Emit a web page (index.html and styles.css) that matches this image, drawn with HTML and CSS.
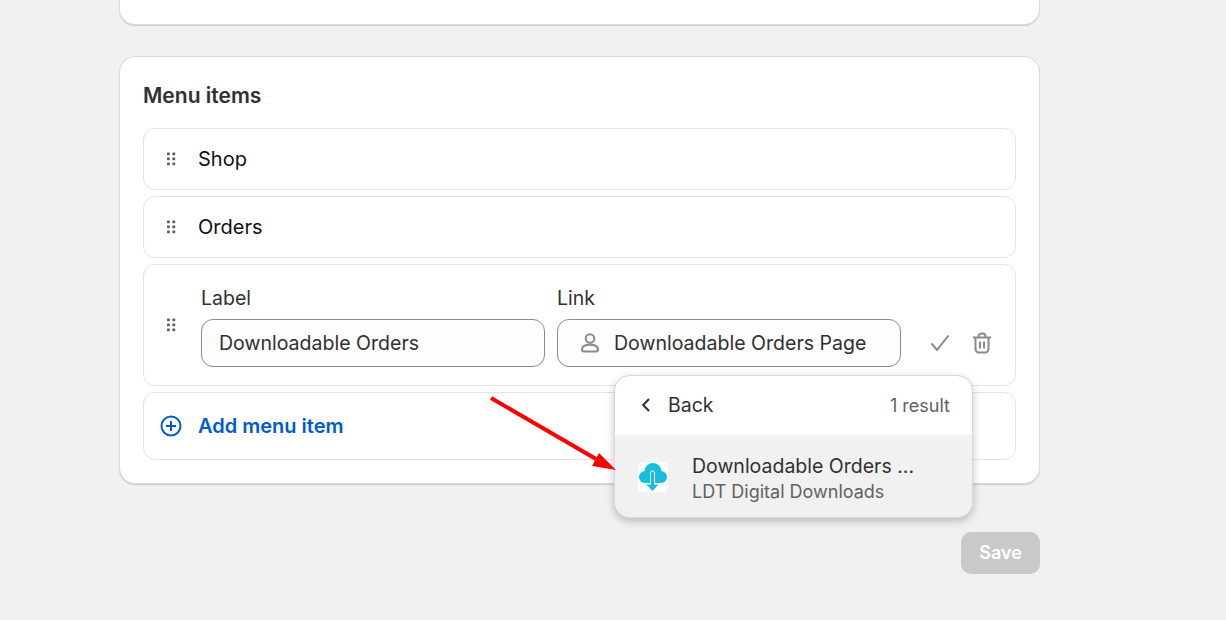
FILE: index.html
```html
<!DOCTYPE html>
<html lang="en">
<head>
<meta charset="utf-8">
<title>Menu items</title>
<link rel="stylesheet" href="styles.css">
</head>
<body>
<main class="page">
  <div class="card card-top"></div>
  <section class="card card-menu">
    <h2 class="title">Menu items</h2>
    <div class="rows">
      <div class="row row-simple">
        <svg class="drag" viewBox="-1 -.5 10 14" width="10" height="14"><g fill="#5c5c5c"><rect x="0" y="0" width="2.800" height="2.800" rx=".7"/><rect x="5.400" y="0" width="2.800" height="2.800" rx=".7"/><rect x="0" y="5" width="2.800" height="2.800" rx=".7"/><rect x="5.400" y="5" width="2.800" height="2.800" rx=".7"/><rect x="0" y="10" width="2.800" height="2.800" rx=".7"/><rect x="5.400" y="10" width="2.800" height="2.800" rx=".7"/></g></svg>
        <span class="row-text">Shop</span>
      </div>
      <div class="row row-simple">
        <svg class="drag" viewBox="-1 -.5 10 14" width="10" height="14"><g fill="#5c5c5c"><rect x="0" y="0" width="2.800" height="2.800" rx=".7"/><rect x="5.400" y="0" width="2.800" height="2.800" rx=".7"/><rect x="0" y="5" width="2.800" height="2.800" rx=".7"/><rect x="5.400" y="5" width="2.800" height="2.800" rx=".7"/><rect x="0" y="10" width="2.800" height="2.800" rx=".7"/><rect x="5.400" y="10" width="2.800" height="2.800" rx=".7"/></g></svg>
        <span class="row-text">Orders</span>
      </div>
      <div class="row row-edit">
        <svg class="drag drag-edit" viewBox="-1 -.5 10 14" width="10" height="14"><g fill="#5c5c5c"><rect x="0" y="0" width="2.800" height="2.800" rx=".7"/><rect x="5.400" y="0" width="2.800" height="2.800" rx=".7"/><rect x="0" y="5" width="2.800" height="2.800" rx=".7"/><rect x="5.400" y="5" width="2.800" height="2.800" rx=".7"/><rect x="0" y="10" width="2.800" height="2.800" rx=".7"/><rect x="5.400" y="10" width="2.800" height="2.800" rx=".7"/></g></svg>
        <div class="field">
          <label class="field-label">Label</label>
          <div class="input"><span>Downloadable Orders</span></div>
        </div>
        <div class="field">
          <label class="field-label">Link</label>
          <div class="input input-icon">
            <svg viewBox="0 0 20 22" width="20" height="22" fill="none" stroke="#8a8a8a" stroke-width="2"><circle cx="10" cy="6.500" r="4.300"/><path d="M2 17.500c0-3.200 3-4.700 8-4.700s8 1.500 8 4.700c0 1.300-.8 2-2 2H4c-1.200 0-2-.7-2-2z"/></svg>
            <span>Downloadable Orders Page</span>
          </div>
        </div>
        <div class="actions">
          <svg viewBox="0 0 20 20" width="20" height="20" fill="none" stroke="#8a8a8a" stroke-width="2"><path d="M1.500 10.500l5.500 6.500L18.500 2.500"/></svg>
          <svg viewBox="0 0 20 22" width="20" height="22" fill="none" stroke="#8a8a8a" stroke-width="2"><path d="M1 5.500h18M6.500 5V4.500a3 3 0 0 1 3-3h1a3 3 0 0 1 3 3V5M3.500 5.500v11.500a3.500 3.500 0 0 0 3.500 3.500h6a3.500 3.500 0 0 0 3.500-3.500V5.500M8 9.500v7M12 9.500v7"/></svg>
        </div>
      </div>
      <div class="row row-add">
        <svg viewBox="0 0 22 22" width="22" height="22" fill="none" stroke="#005bd3" stroke-width="2"><circle cx="11" cy="11" r="9.500"/><path d="M11 6v10M6 11h10"/></svg>
        <span class="add-text">Add menu item</span>
      </div>
    </div>
  </section>
  <div class="footer"><button class="save">Save</button></div>

  <div class="popover">
    <div class="pop-head">
      <svg viewBox="0 0 12 16" width="12" height="16" fill="none" stroke="#303030" stroke-width="2"><path d="M9 2L3.200 8 9 14"/></svg>
      <span class="back">Back</span>
      <span class="count">1 result</span>
    </div>
    <div class="pop-item">
      <div class="app-icon">
        <svg viewBox="0 0 30 30" width="30" height="30"><g fill="#17bde0"><circle cx="15" cy="9.500" r="8.500"/><circle cx="7" cy="15" r="6"/><circle cx="23" cy="15" r="6"/><rect x="7" y="12" width="16" height="9"/></g><path fill="none" stroke="#fff" stroke-width="1" d="M12.500 23V11a2 2 0 0 1 4 0V23"/><path fill="#17bde0" d="M13 11h3v13h-3z"/><path fill="#17bde0" d="M8.500 22.500h12l-6 6.500z"/></svg>
      </div>
      <div class="item-text">
        <div class="item-title">Downloadable Orders ...</div>
        <div class="item-sub">LDT Digital Downloads</div>
      </div>
    </div>
  </div>

  <svg class="arrow" viewBox="0 0 130 80" width="130" height="80"><path d="M1 2L106 63" stroke="#f00" stroke-width="4" fill="none"/><path d="M126 74L102 70 109 57z" fill="#f00"/></svg>
</main>
</body>
</html>
```
FILE: styles.css
```css
* { box-sizing: border-box; }
html, body { margin: 0; height: 620px; overflow: hidden; }
body {
  background: #f1f1f1;
  font-family: Inter, "Liberation Sans", sans-serif;
  color: #303030;
}
.page { position: relative; width: 921px; margin-left: 119px; height: 620px; }
.card {
  background: #fff;
  border: 1px solid #dcdcdc;
  box-shadow: 0 1px 1px rgba(0,0,0,.16);
  border-radius: 16px;
}
.card-top { height: 25px; border-top: 0; border-radius: 0 0 16px 16px; }
.card-menu { margin-top: 31px; height: 428px; padding: 24px 23px 23px 23px; }
.title { margin: 0 0 19px; font-size: 21px; line-height: 30px; font-weight: 600; height: 28px; }
.rows { display: flex; flex-direction: column; gap: 6px; }
.row {
  border: 1px solid #e3e3e3;
  border-radius: 12px;
  background: #fff;
  display: flex;
  align-items: center;
}
.row-simple { height: 62px; padding-left: 22px; }
.drag { flex: none; }
.row-text { margin-left: 22px; font-size: 20px; color: #111; }
.row-edit { height: 122px; padding-left: 22px; position: relative; }
.drag-edit { margin-right: 25px; }
.field { width: 344px; margin-right: 12px; align-self: flex-start; margin-top: 21px; }
.field-label { display: block; font-size: 19.500px; line-height: 24px; margin-bottom: 9px; }
.input {
  height: 48px;
  border: 1px solid #8a8a8a;
  border-radius: 12px;
  background: #fdfdfd;
  display: flex;
  align-items: center;
  padding-left: 17px;
  font-size: 19.550px;
}
.input-icon { padding-left: 22px; gap: 14px; }
.actions { display: flex; align-items: center; gap: 22px; margin: 36px 0 0 17px; }
.row-add { height: 68px; padding-left: 16px; gap: 16px; }
.add-text { color: #005bd3; font-size: 20px; font-weight: 600; }
.footer { display: flex; justify-content: flex-end; margin-top: 48px; }
.save {
  width: 79px; height: 42px; border: 0; border-radius: 10px; padding: 0 0 2px;
  background: #c9c9c9; color: #fff; font: 600 18px Inter, sans-serif;
}
.popover {
  position: absolute; left: 495px; top: 375px; width: 359px; height: 143px;
  background: #fff;
  border: 1px solid #d8d8d8;
  border-radius: 16px;
  overflow: hidden;
  box-shadow: 0 3px 8px rgba(0,0,0,.24);
}
.pop-head { height: 59px; display: flex; align-items: center; padding: 0 22px 1px 25px; }
.back { margin-left: 16px; font-size: 19.500px; }
.count { margin-left: auto; font-size: 18px; color: #616161; }
.pop-item { height: 84px; background: #f1f1f1; display: flex; align-items: center; padding-left: 23px; }
.app-icon { width: 30px; height: 30px; background: #fff; border-radius: 5px; flex: none; }
.app-icon svg { display: block; }
.item-text { margin: 4px 0 0 24px; }
.item-title { font-size: 19.500px; line-height: 26px; }
.item-sub { font-size: 18px; line-height: 26px; color: #616161; }
.arrow { position: absolute; left: 371px; top: 396px; }
```
